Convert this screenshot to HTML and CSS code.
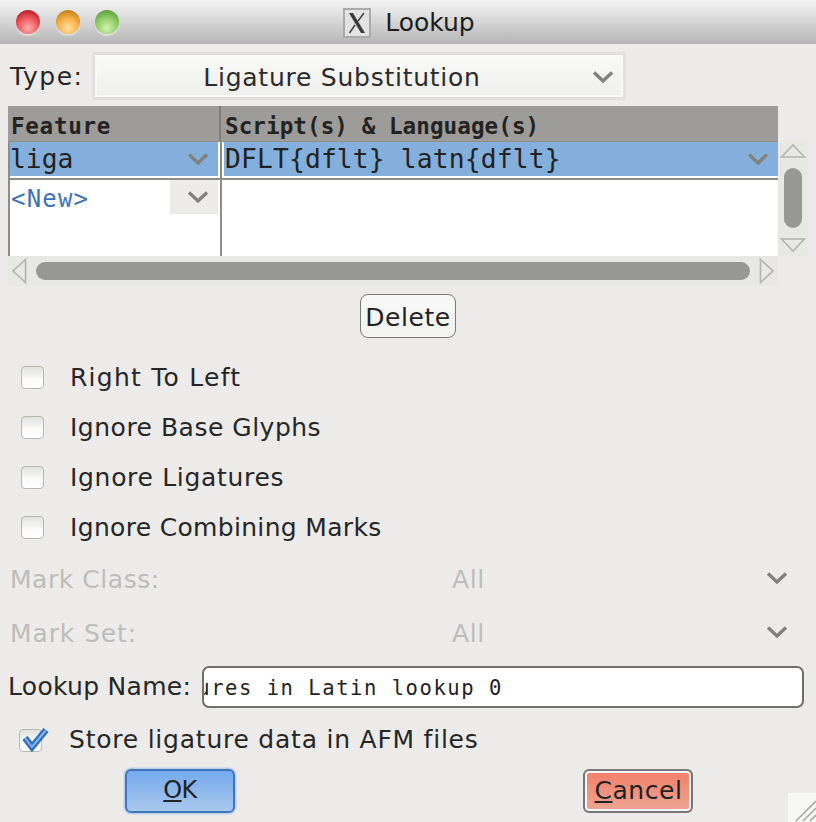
FILE: index.html
```html
<!DOCTYPE html>
<html lang="en">
<head>
<meta charset="utf-8">
<title>Lookup</title>
<link rel="stylesheet" href="styles.css">
</head>
<body>
<svg class="defs" width="0" height="0" aria-hidden="true">
  <symbol id="chev" viewBox="0 0 22 14"><path d="M2 2.5 L11 11 L20 2.5" fill="none" stroke="#80807c" stroke-width="3.4"/></symbol>
</svg>
<div class="window">
  <header class="titlebar">
    <div class="lights"><span class="light red"></span><span class="light amber"></span><span class="light green"></span></div>
    <div class="title">
      <svg class="x-icon" viewBox="0 0 28 30"><rect x="1" y="1" width="26" height="28" fill="#e2e2e2" stroke="#aaaaaa" stroke-width="2"/><path d="M6 5 H10 L22 25 H18 Z" fill="#3a3a3a"/><path d="M21 5 L15 13 M12 17 L6.5 25" stroke="#3a3a3a" stroke-width="1.4"/></svg>
      <span>Lookup</span>
    </div>
  </header>

  <div class="type-row">
    <span class="label type-label">Type:</span>
    <div class="combo"><span class="combo-text">Ligature Substitution</span><svg class="chev combo-chev"><use href="#chev"/></svg></div>
  </div>

  <div class="table-wrap">
    <div class="table">
      <div class="thead">
        <div class="th th-first">Feature</div>
        <div class="th th-second">Script(s) &amp; Language(s)</div>
      </div>
      <div class="tbody">
        <div class="col col-first">
          <div class="cell sel"><span>liga</span><svg class="chev"><use href="#chev"/></svg></div>
          <div class="cell new"><span class="new-text">&lt;New&gt;</span><span class="new-btn"><svg class="chev"><use href="#chev"/></svg></span></div>
        </div>
        <div class="col col-second">
          <div class="cell sel"><span class="scripts">DFLT{dflt} latn{dflt}</span><svg class="chev"><use href="#chev"/></svg></div>
          <div class="cell blank"></div>
        </div>
      </div>
      <div class="hscroll">
        <svg class="arrow" viewBox="0 0 16 26"><path d="M14.5 1.5 L2 13 L14.5 24.5 Z" fill="none" stroke="#b3b3af" stroke-width="1.6"/></svg>
        <div class="hthumb"></div>
        <svg class="arrow" viewBox="0 0 16 26"><path d="M1.5 1.5 L14 13 L1.5 24.5 Z" fill="none" stroke="#b3b3af" stroke-width="1.6"/></svg>
      </div>
    </div>
    <div class="vscroll">
      <svg class="varrow" viewBox="0 0 26 16"><path d="M1.5 14 L13 2 L24.5 14 Z" fill="none" stroke="#b3b3af" stroke-width="1.6"/></svg>
      <div class="vthumb"></div>
      <svg class="varrow" viewBox="0 0 26 16"><path d="M1.5 2 L13 14 L24.5 2 Z" fill="none" stroke="#b3b3af" stroke-width="1.6"/></svg>
    </div>
  </div>

  <div class="delete-row"><button class="btn delete">Delete</button></div>

  <div class="checks">
    <label class="check"><span class="box"></span><span class="label ls-rtl">Right To Left</span></label>
    <label class="check"><span class="box"></span><span class="label ls-base">Ignore Base Glyphs</span></label>
    <label class="check"><span class="box"></span><span class="label ls-lig">Ignore Ligatures</span></label>
    <label class="check"><span class="box"></span><span class="label ls-comb">Ignore Combining Marks</span></label>
  </div>

  <div class="mark mark-class"><span class="mark-label">Mark Class:</span><span class="mark-val">All</span><svg class="chev mark-chev"><use href="#chev"/></svg></div>
  <div class="mark mark-set"><span class="mark-label ls-set">Mark Set:</span><span class="mark-val">All</span><svg class="chev mark-chev"><use href="#chev"/></svg></div>

  <div class="name-row">
    <span class="label ls-name">Lookup Name:</span>
    <div class="field"><span class="field-text">ures in Latin lookup 0</span></div>
  </div>

  <div class="store-row">
    <span class="box box-checked"><svg viewBox="0 0 30 24"><path d="M6 10 L13 19 L27 2" fill="none" stroke="#2f6dbd" stroke-width="6.5"/><path d="M6 10 L13 19 L27 2" fill="none" stroke="#86b4ea" stroke-width="2"/></svg></span>
    <span class="label ls-store">Store ligature data in AFM files</span>
  </div>

  <div class="actions">
    <button class="btn ok"><u>O</u>K</button>
    <button class="btn cancel"><u>C</u>ancel</button>
  </div>

  <svg class="grip" viewBox="0 0 28 29"><rect width="28" height="29" fill="#f6f6f5"/><path d="M8 28 L28 8 M15 28 L28 15 M22 28 L28 22" stroke="#a9a9a6" stroke-width="1.6"/></svg>
</div>
</body>
</html>
```

FILE: styles.css
```css
* { box-sizing: border-box; }
html, body { margin: 0; padding: 0; }
body { background: #ecebe9; font-family: "DejaVu Sans", sans-serif; color: #222; }
.defs { position: absolute; }
.window { position: relative; width: 816px; height: 822px; overflow: hidden; background: #ecebe9; display: flex; flex-direction: column; }
.label { font-size: 25px; letter-spacing: 0.55px; line-height: 30px; white-space: nowrap; color: #262626; }
.ls-rtl { letter-spacing: 1.25px; }
.ls-base { letter-spacing: 0.5px; }
.ls-lig { letter-spacing: 0.68px; }
.ls-comb { letter-spacing: 0.32px; }
.ls-store { letter-spacing: 0.77px; }
.ls-set { letter-spacing: 0.88px; }
.ls-name { letter-spacing: 0.3px; }

.titlebar { position: relative; height: 44px; flex: none; background: linear-gradient(#eeeeee 0, #e6e6e6 20%, #b4b4b4 100%); border-top: 2px solid #f2f2f2; display: flex; align-items: center; justify-content: center; }
.lights { position: absolute; left: 16px; top: 8px; display: flex; gap: 15.5px; }
.light { width: 24px; height: 24px; border-radius: 50%; box-shadow: 0 2px 1px rgba(255,255,255,.45); }
.red { background: radial-gradient(circle at 50% 75%, #ffb0b0 0, #f25a5f 45%, #b21c28 85%, #7d1b22 100%); }
.amber { background: radial-gradient(circle at 50% 75%, #ffe0a0 0, #f6b24a 45%, #c07a18 85%, #8b6520 100%); }
.green { background: radial-gradient(circle at 50% 75%, #d4f2b0 0, #94d069 45%, #5a9a3c 85%, #4f7f45 100%); }
.title { display: flex; align-items: center; gap: 14px; font-size: 25px; color: #1d1d1d; margin-left: 2px; margin-top: -1px; }
.x-icon { width: 28px; height: 30px; display: block; }

.type-row { flex: none; height: 48px; margin-top: 8px; padding-left: 10px; display: flex; align-items: center; }
.type-label { width: 82px; letter-spacing: 1.55px; padding-top: 2px; }
.combo { position: relative; width: 534px; height: 48px; border: 3px solid #e2e1df; background: linear-gradient(#f9f9f8, #eeeeec); box-shadow: inset 0 0 0 2px #f8f8f7; display: flex; align-items: center; justify-content: center; padding-right: 34px; }
.combo-text { font-size: 25px; letter-spacing: 0.75px; color: #2b2b2b; padding-top: 2px; }
.chev { width: 22px; height: 14px; display: block; flex: none; }
.combo-chev { position: absolute; right: 9px; top: 15px; }

.table-wrap { flex: none; margin-top: 6px; margin-left: 8px; width: 800px; display: flex; height: 180px; }
.table { width: 770px; display: flex; flex-direction: column; }
.thead { height: 35px; flex: none; background: #9d9c99; display: flex; font-family: "DejaVu Sans Mono", monospace; font-weight: 700; font-size: 22.6px; color: #232323; }
.th { padding-left: 3px; line-height: 40px; white-space: nowrap; flex: 1; }
.th-first { flex: none; width: 213px; border-right: 2px solid #7f7e7b; padding-left: 3px; letter-spacing: 0.7px; }
.th-second { padding-left: 4px; letter-spacing: 0.06px; }
.tbody { flex: none; height: 115px; display: flex; background: #fff; border-top: 1px solid #8f8f8c; }
.col { display: flex; flex-direction: column; }
.col-first { width: 214px; border-left: 2px solid #8c8c89; border-right: 2px solid #8c8c89; }
.col-second { flex: 1; }
.cell { display: flex; align-items: center; justify-content: space-between; font-family: "DejaVu Sans Mono", monospace; font-size: 26.3px; color: #222; white-space: nowrap; }
.sel { height: 34px; background: #84afdc; border-right: 2px solid #fff; flex: none; padding: 0 9px 0 0; margin-bottom: 2px; }
.col-second .sel { margin-left: 2px; border-right: 0; padding: 0 9px 0 1px; }
.scripts { letter-spacing: 0.15px; }
.cell.new, .cell.blank { flex: 1; border-top: 2px solid #8c8c89; align-items: flex-start; }
.new-text { font-family: "DejaVu Sans Mono", monospace; font-size: 24px; color: #3f73b5; line-height: 38px; padding-left: 1px; letter-spacing: 1.2px; }
.new-btn { width: 48px; height: 34px; margin-right: 2px; background: #ecebe9; display: flex; align-items: center; justify-content: center; padding-left: 8px; }
.hscroll { flex: none; height: 30px; background: #e7e7e4; display: flex; align-items: center; padding: 0 3px; }
.arrow { width: 16px; height: 26px; flex: none; }
.hthumb { flex: 1; height: 18px; margin: 0 9px; border-radius: 9px; background: #979793; }
.vscroll { width: 30px; height: 116px; display: flex; flex-direction: column; align-items: center; background: #e7e7e4; margin-top: 34px; justify-content: space-between; padding: 3px 0; }
.varrow { width: 26px; height: 16px; flex: none; }
.vthumb { width: 18px; height: 60px; border-radius: 9px; background: #979793; }

.delete-row { flex: none; display: flex; justify-content: center; margin-top: 8px; height: 44px; }
.btn { font-family: "DejaVu Sans", sans-serif; font-size: 25px; letter-spacing: 0.55px; color: #222; padding: 0; cursor: default; }
.delete { width: 96px; height: 44px; border: 1.5px solid #7a7a7a; border-radius: 8px; background: linear-gradient(#f8f8f8, #f2f2f1); padding-top: 2px; }

.checks { flex: none; margin-top: 14px; display: flex; flex-direction: column; padding-left: 21px; }
.check { height: 50px; display: flex; align-items: center; gap: 26px; }
.check .label { padding-top: 2px; }
.box { width: 23px; height: 23px; flex: none; border: 1.5px solid #b4b8ae; border-radius: 4px; background: linear-gradient(#dfe2dd, #fafafa 60%, #fff); display: block; }
.mark { flex: none; height: 54px; position: relative; display: flex; align-items: center; padding-left: 10px; font-size: 25px; letter-spacing: 0.55px; color: #bcbcba; }
.mark-label { width: 442px; }
.mark-val { color: #bcbcba; }
.mark-chev { position: absolute; left: 766px; top: 19px; }

.name-row { flex: none; height: 42px; margin-top: 6px; padding-left: 8px; display: flex; align-items: center; gap: 11px; }
.field { width: 602px; height: 42px; border: 2px solid #706f6b; border-radius: 7px; background: #fff; overflow: hidden; display: flex; align-items: center; }
.field-text { font-family: "DejaVu Sans Mono", monospace; font-size: 20.5px; letter-spacing: 1.55px; color: #222; white-space: nowrap; margin-left: -7px; margin-top: 1px; }

.store-row { flex: none; margin-top: 17px; height: 30px; padding-left: 19px; display: flex; align-items: center; gap: 27px; }
.box-checked { position: relative; }
.box-checked svg { position: absolute; left: -1px; top: -2px; width: 30px; height: 24px; overflow: visible; }

.actions { flex: none; margin-top: 14px; position: relative; display: flex; padding-left: 125px; gap: 348px; }
.ok { width: 110px; height: 44px; border: 2px solid #3f75b9; border-radius: 6px; background: linear-gradient(#74a9ee, #a9c8ec); box-shadow: 0 0 0 1.5px #b9d0ec; padding-bottom: 2px; letter-spacing: -0.6px; font-size: 24px; }
.cancel { width: 110px; height: 44px; border: 2px solid #777; border-radius: 6px; background: linear-gradient(#f27f68, #eea594); box-shadow: inset 0 0 0 2px #f6f6f5; padding-bottom: 2px; padding-left: 1px; }
.grip { position: absolute; right: 0; bottom: 0; width: 28px; height: 29px; }
```
